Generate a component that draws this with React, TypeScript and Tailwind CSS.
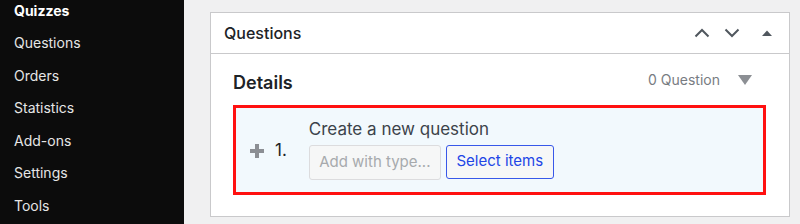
import React from "react";

const items = ["Quizzes", "Questions", "Orders", "Statistics", "Add-ons", "Settings", "Tools"];

export default function App() {
  return (
    <div className="flex w-[800px] h-[224px] overflow-hidden bg-[#f0f0f1]" style={{ fontFamily: "Inter, 'Noto Sans', sans-serif" }}>
      <div className="w-[184px] shrink-0 bg-[#0c0c0c] flex flex-col pl-[14px] -mt-[6px]">
        {items.map((t, i) => (
          <div
            key={t}
            className={`h-[32.5px] flex items-center text-[14px] ${i === 0 ? "font-bold text-white" : "text-[#e6e6e6]"}`}
          >
            {t}
          </div>
        ))}
      </div>
      <div className="flex-1 pl-[26px] pt-[12px] pr-[10px]">
        <div className="bg-white border border-[#c9c9cb] h-[205px] flex flex-col">
          <div className="h-[41px] border-b border-[#c9c9cb] flex items-center pl-[13px] pr-[17px]">
            <span className="text-[16px] font-medium text-[#1d2327]">Questions</span>
            <div className="ml-auto flex items-center">
              <svg width="16" height="10" viewBox="0 0 16 10" className="mr-[14px]">
                <path d="M1.5 8.5 L8 2 L14.5 8.5" fill="none" stroke="#50575e" strokeWidth="2" />
              </svg>
              <svg width="16" height="10" viewBox="0 0 16 10" className="mr-[22px]">
                <path d="M1.5 1.5 L8 8 L14.5 1.5" fill="none" stroke="#50575e" strokeWidth="2" />
              </svg>
              <svg width="10" height="6" viewBox="0 0 10 6">
                <path d="M0 6 L5 0.5 L10 6 Z" fill="#50575e" />
              </svg>
            </div>
          </div>
          <div className="pl-[22px] pr-[23px] pt-[14px]">
            <div className="flex items-center h-[28px]">
              <span className="text-[18px] font-semibold text-[#1d2327]">Details</span>
              <span className="ml-auto text-[14px] text-[#787c82] -mt-[5px]">0 Question</span>
              <svg width="14" height="10" viewBox="0 0 14 10" className="ml-[18px] mr-[14px] -mt-[4px]">
                <path d="M0 0 L14 0 L7 10 Z" fill="#8c8f94" />
              </svg>
            </div>
            <div className="mt-[9px] h-[90px] border-[3px] border-[#ff1010] bg-[#f2f9fd] flex items-center pl-[13px]">
              <svg width="16" height="16" viewBox="0 0 16 16" className="mt-[2px]">
                <path d="M8 1 V15 M1 8 H15" stroke="#8c8f94" strokeWidth="4" />
              </svg>
              <span className="ml-[10px] text-[17px] text-[#1d2327] mt-[2px]">1.</span>
              <div className="ml-[22px] flex flex-col">
                <span className="text-[17px] text-[#3c434a] leading-[22px] -mt-[3px]">Create a new question</span>
                <div className="flex gap-[5px] mt-[5px]">
                  <div className="w-[132px] h-[35px] rounded-[3px] border border-[#dcdcde] bg-[#f6f7f7] flex items-center justify-center text-[15px] text-[#a7aaad]">
                    Add with type...
                  </div>
                  <div className="w-[108px] h-[34px] rounded-[3px] border border-[#3858e9] bg-[#f6f7f7] flex items-center justify-center text-[15px] text-[#2145e6]">
                    Select items
                  </div>
                </div>
              </div>
            </div>
          </div>
        </div>
      </div>
    </div>
  );
}
